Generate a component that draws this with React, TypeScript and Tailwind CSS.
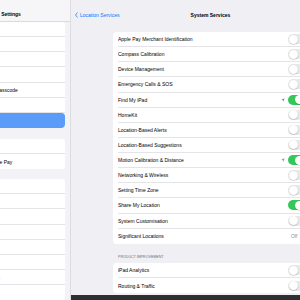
import React from "react";

const FONT = { fontFamily: '"Liberation Sans", Arial, sans-serif' };

function Toggle({ on }: { on: boolean }) {
  return on ? (
    <div className="w-[17px] h-[10px] rounded-full bg-[#34c759] flex items-center justify-end px-[0.6px] shrink-0">
      <div className="w-[9px] h-[9px] rounded-full bg-white shadow-[0_0.5px_1px_rgba(0,0,0,0.25)]" />
    </div>
  ) : (
    <div className="w-[17px] h-[10px] rounded-full bg-[#e9e9eb] flex items-center justify-start px-[0.6px] shrink-0">
      <div className="w-[9px] h-[9px] rounded-full bg-white shadow-[0_0.5px_1.2px_rgba(0,0,0,0.3)]" />
    </div>
  );
}

function Arrow({ color }: { color: string }) {
  return (
    <svg width="4" height="4" viewBox="0 0 24 24" className="shrink-0">
      <path d="M22 2 L2 10.5 L11 13 L13.5 22 Z" fill={color} />
    </svg>
  );
}

type Row = {
  label: string;
  toggle?: boolean;
  arrow?: string;
  off?: boolean;
};

const services: Row[] = [
  { label: "Apple Pay Merchant Identification", toggle: false },
  { label: "Compass Calibration", toggle: false },
  { label: "Device Management", toggle: false },
  { label: "Emergency Calls & SOS", toggle: false },
  { label: "Find My iPad", toggle: true, arrow: "#b45ee0" },
  { label: "HomeKit", toggle: false },
  { label: "Location-Based Alerts", toggle: false },
  { label: "Location-Based Suggestions", toggle: false },
  { label: "Motion Calibration & Distance", toggle: true, arrow: "#8e8e93" },
  { label: "Networking & Wireless", toggle: false },
  { label: "Setting Time Zone", toggle: false },
  { label: "Share My Location", toggle: true },
  { label: "System Customisation", toggle: false },
  { label: "Significant Locations", off: true },
];

const improvement: Row[] = [
  { label: "iPad Analytics", toggle: false },
  { label: "Routing & Traffic", toggle: false },
];

function DetailRow({ row, last }: { row: Row; last: boolean }) {
  return (
    <div className="h-[15.14px] flex pl-[5px]">
      <div
        className={`flex-1 h-full flex items-center pr-[8px] ${
          last ? "" : "border-b border-[#e3e3e8]"
        }`}
      >
        <span className="flex-1 text-[5px] leading-[6px] text-black whitespace-nowrap">
          {row.label}
        </span>
        {row.arrow && (
          <div className="mr-[3px]">
            <Arrow color={row.arrow} />
          </div>
        )}
        {row.toggle !== undefined && <Toggle on={row.toggle} />}
        {row.off && (
          <div className="flex items-center gap-[4.5px]">
            <span className="text-[5px] leading-[6px] text-[#8e8e93]">Off</span>
            <svg width="3" height="5" viewBox="0 0 6 10" className="shrink-0">
              <path d="M1 1 L5 5 L1 9" fill="none" stroke="#c4c4c7" strokeWidth="1.3" />
            </svg>
          </div>
        )}
      </div>
    </div>
  );
}

function SideRow({
  label,
  last,
  selected,
}: {
  label: string;
  last: boolean;
  selected?: boolean;
}) {
  return (
    <div
      className={`h-[15.14px] flex ${
        selected ? "bg-[#5a9cf7] rounded-r-[3.5px]" : ""
      }`}
    >
      <div
        className={`flex-1 h-full flex items-center pl-[10px] ${
          last || selected ? "" : "border-b border-[#e3e3e8]"
        }`}
      >
        <span
          className={`text-[5px] leading-[6px] whitespace-nowrap ${
            selected ? "text-white" : "text-black"
          }`}
        >
          {label}
        </span>
      </div>
    </div>
  );
}

function SideGroup({
  items,
  selected,
}: {
  items: string[];
  selected?: string;
}) {
  return (
    <div className="mr-[6px] bg-white rounded-r-[3.5px] overflow-hidden">
      {items.map((l, i) => (
        <SideRow
          key={l}
          label={l}
          last={i === items.length - 1}
          selected={l === selected}
        />
      ))}
    </div>
  );
}

export default function App() {
  return (
    <div
      className="w-[300px] h-[300px] overflow-hidden flex bg-[#efeff4]"
      style={FONT}
    >
      <aside className="w-[71px] shrink-0 overflow-hidden bg-[#f2f2f7] border-r border-[#dcdce1]">
        <div className="w-[111px] -ml-[40px] flex flex-col">
          <div className="h-[22px] pt-[7px] flex items-center justify-center pr-[9px] bg-[#f6f6f8] border-b border-[#d9d9de]">
            <span className="text-[5px] leading-[6px] font-bold text-black">
              Settings
            </span>
          </div>
          <SideGroup
            items={[
              "Accessibility",
              "Wallpaper",
              "Siri & Search",
              "Apple Pencil",
              "Touch ID & Passcode",
              "Battery",
              "Privacy",
            ]}
            selected="Privacy"
          />
          <div className="h-[11px]" />
          <SideGroup items={["App Store", "Wallet & Apple Pay"]} />
          <div className="h-[10px]" />
          <SideGroup
            items={[
              "Passwords",
              "Mail",
              "Contacts",
              "Calendar",
              "Notes",
              "Reminders",
              "Voice Memos",
              "Messages",
            ]}
          />
        </div>
      </aside>

      <main className="w-[279px] shrink-0 flex flex-col">
        <div className="h-[22px] pt-[7px] grid grid-cols-[1fr_auto_1fr] items-center">
          <div className="flex items-center pl-[4px] gap-[2px] text-[#007aff]">
            <svg width="3" height="6" viewBox="0 0 6 12" className="shrink-0">
              <path d="M5 1 L1 6 L5 11" fill="none" stroke="#007aff" strokeWidth="1.4" />
            </svg>
            <span className="text-[5px] leading-[6px] whitespace-nowrap">
              Location Services
            </span>
          </div>
          <span className="text-[5px] leading-[6px] font-bold text-black whitespace-nowrap">
            System Services
          </span>
          <div />
        </div>

        <div className="h-[10px]" />
        <div className="ml-[42px] w-[200px] bg-white rounded-[3.5px] overflow-hidden">
          {services.map((r, i) => (
            <DetailRow key={r.label} row={r} last={i === services.length - 1} />
          ))}
        </div>

        <div className="ml-[42px] h-[19.3px] flex items-end pb-[4px] pl-[5px]">
          <span className="text-[3.6px] leading-[4px] text-[#6d6d72] whitespace-nowrap">
            PRODUCT IMPROVEMENT
          </span>
        </div>

        <div className="ml-[42px] w-[200px] bg-white rounded-[3.5px] overflow-hidden">
          {improvement.map((r, i) => (
            <DetailRow key={r.label} row={r} last={i === improvement.length - 1} />
          ))}
        </div>

        <div className="flex-1" />
        <div className="h-[5px] bg-[#2f2f31]" />
      </main>
    </div>
  );
}
